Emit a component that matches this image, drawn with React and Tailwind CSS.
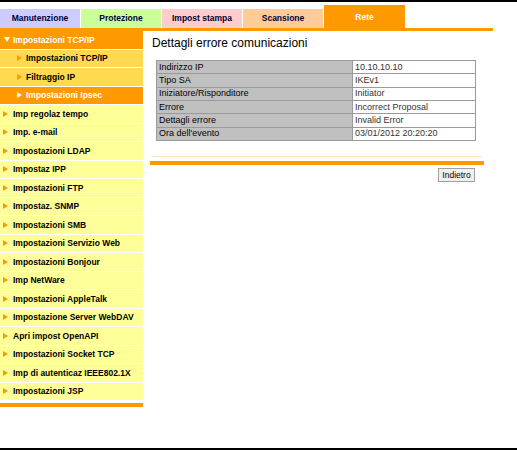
import React from 'react';

const TABS = [
  { label: 'Manutenzione', bg: 'bg-[#ccccff]' },
  { label: 'Protezione', bg: 'bg-[#ccff99]' },
  { label: 'Impost stampa', bg: 'bg-[#ffcccc]' },
  { label: 'Scansione', bg: 'bg-[#ffcc99]' },
];

const MENU = [
  'Imp regolaz tempo',
  'Imp. e-mail',
  'Impostazioni LDAP',
  'Impostaz IPP',
  'Impostazioni FTP',
  'Impostaz. SNMP',
  'Impostazioni SMB',
  'Impostazioni Servizio Web',
  'Impostazioni Bonjour',
  'Imp NetWare',
  'Impostazioni AppleTalk',
  'Impostazione Server WebDAV',
  'Apri impost OpenAPI',
  'Impostazioni Socket TCP',
  'Imp di autenticaz IEEE802.1X',
  'Impostazioni JSP',
];

const DETAILS = [
  ['Indirizzo IP', '10.10.10.10'],
  ['Tipo SA', 'IKEv1'],
  ['Iniziatore/Risponditore', 'Initiator'],
  ['Errore', 'Incorrect Proposal'],
  ['Dettagli errore', 'Invalid Error'],
  ["Ora dell'evento", '03/01/2012 20:20:20'],
];

function Arrow({ white }) {
  return (
    <svg width="5" height="6" viewBox="0 0 5 6" className="shrink-0">
      <path d="M0 0 L5 3 L0 6 Z" fill={white ? '#ffffff' : '#ff9900'} />
    </svg>
  );
}

function DownArrow() {
  return (
    <svg width="6" height="5" viewBox="0 0 6 5" className="shrink-0">
      <path d="M0 0 L6 0 L3 5 Z" fill="#ffffff" />
    </svg>
  );
}

function Sidebar() {
  return (
    <div className="w-[143px] shrink-0 flex flex-col text-[8.5px] font-bold leading-none">
      <div className="h-[17.5px] mb-[1px] bg-[#ff9900] text-white flex items-center pl-[4px] gap-[3px]">
        <DownArrow />
        <span>Impostazioni TCP/IP</span>
      </div>
      <div className="h-[17.5px] mb-[1px] bg-[#ffd94f] text-black flex items-center pl-[17px] gap-[4px]">
        <Arrow />
        <span>Impostazioni TCP/IP</span>
      </div>
      <div className="h-[17.5px] mb-[1px] bg-[#ffd94f] text-black flex items-center pl-[17px] gap-[4px]">
        <Arrow />
        <span>Filtraggio IP</span>
      </div>
      <div className="h-[17.5px] mb-[1px] bg-[#ff9900] text-white flex items-center pl-[17px] gap-[4px]">
        <Arrow white />
        <span>Impostazioni Ipsec</span>
      </div>
      {MENU.map((m) => (
        <div key={m} className="h-[17.5px] mb-[1px] bg-[#ffff99] text-black flex items-center pl-[3px] gap-[5px]">
          <Arrow />
          <span>{m}</span>
        </div>
      ))}
      <div className="mt-[2px] h-[4px] bg-[#ff9900]" />
    </div>
  );
}

function Content() {
  return (
    <div className="ml-[7px] w-[334px] flex flex-col">
      <div className="mt-[4px] ml-[2px] text-[12px] leading-[16px] text-black">
        Dettagli errore comunicazioni
      </div>
      <table className="mt-[9px] ml-[6px] w-[320px] border-collapse text-[9px] leading-none">
        <tbody>
          {DETAILS.map(([k, v]) => (
            <tr key={k} className="h-[13.33px]">
              <td className="w-[196px] bg-[#c0c0c0] border border-[#9a9a9a] pl-[2px] text-black">{k}</td>
              <td className="bg-white border border-[#9a9a9a] pl-[2px] text-[#333333]">{v}</td>
            </tr>
          ))}
        </tbody>
      </table>
      <div className="mt-[15px] mx-[1px] w-[331px] h-[1px] bg-[#ffe6bf]" />
      <div className="mt-[4px] h-[4px] bg-[#ff9900]" />
      <div className="mt-[3px] flex justify-end pr-[9px]">
        <button className="w-[37px] h-[14px] bg-[#f0f0f0] border border-[#a0a0a0] text-[8.5px] leading-none text-black">
          Indietro
        </button>
      </div>
    </div>
  );
}

export default function App() {
  return (
    <div className="w-[517px] h-[450px] box-border border-t-2 border-b-2 border-black bg-white font-['Liberation_Sans',Arial,sans-serif] flex flex-col overflow-hidden">
      <div className="mt-[3px] w-[493px] flex items-end border-b-[3px] border-[#ff9900]">
        {TABS.map((t) => (
          <div key={t.label} className={`w-[80px] mr-[1px] h-[19px] ${t.bg} flex items-center justify-center text-[8.5px] font-bold text-[#000033]`}>
            {t.label}
          </div>
        ))}
        <div className="w-[81px] h-[23px] bg-[#ff9900] flex items-center justify-center pt-[2px] text-[8.5px] font-bold text-white">
          Rete
        </div>
      </div>
      <div className="flex">
        <Sidebar />
        <Content />
      </div>
    </div>
  );
}
